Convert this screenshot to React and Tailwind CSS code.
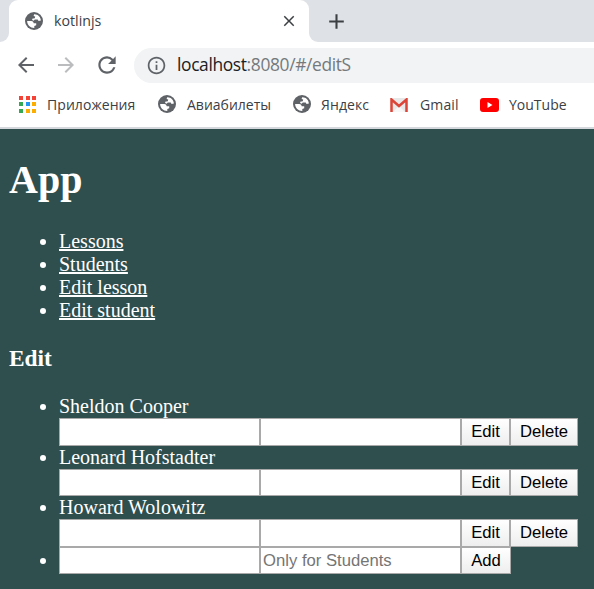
import React from "react";
import { MdArrowBack, MdArrowForward, MdRefresh, MdInfoOutline, MdClose, MdAdd } from "react-icons/md";

const links = ["Lessons", "Students", "Edit lesson", "Edit student"];
const students = ["Sheldon Cooper", "Leonard Hofstadter", "Howard Wolowitz"];
const appColors = [
  "bg-[#f44336]", "bg-[#f44336]", "bg-[#f44336]",
  "bg-[#34a853]", "bg-[#2196f3]", "bg-[#fbad00]",
  "bg-[#34a853]", "bg-[#fbad00]", "bg-[#fbad00]",
];

function Globe() {
  return (
    <svg className="size-[18px] shrink-0" viewBox="0 0 18 18">
      <circle cx="9" cy="9" r="9" fill="#5f6368" />
      <path
        d="M9.200 2.200C12.800 2 15.800 5 15.900 8.600L13.600 8.900 12.700 7.600H9.800L8.600 8.800 7.200 8V6.700L9.800 6.300 10.200 4.600 8.600 3.900Z"
        fill="#fff"
      />
      <path
        d="M2.100 9H6.200C8 9 8.500 10.200 8.700 11.200H11.200V13.300L9.300 14V15.900C5.500 16 2.200 13 2.100 9Z"
        fill="#fff"
      />
    </svg>
  );
}

function TabStrip() {
  return (
    <div className="flex h-[42px] bg-[#dee1e6]">
      <div className="flex w-[9px] shrink-0 bg-white">
        <div className="w-full rounded-br-[9px] bg-[#dee1e6]" />
      </div>
      <div className="flex shrink-0 bg-[#dee1e6]">
        <div className="flex w-[300px] items-center rounded-t-[9px] bg-white pr-[11px] pl-[16px]">
          <Globe />
          <span className="ml-[11px] flex-1 pb-px text-[14.2px] text-[#3c4043]">kotlinjs</span>
          <MdClose className="size-[18px] text-[#3c4043]" />
        </div>
      </div>
      <div className="flex flex-1 bg-white">
        <div className="flex flex-1 items-center rounded-bl-[9px] bg-[#dee1e6] pl-[15px]">
          <MdAdd className="size-[25px] text-[#3c4043]" />
        </div>
      </div>
    </div>
  );
}

function Toolbar() {
  return (
    <div className="flex h-[46px] items-center bg-white pl-[14px]">
      <MdArrowBack className="mb-[1px] size-[24px] shrink-0 text-[#5f6368]" />
      <MdArrowForward className="mb-[1px] ml-[16px] size-[24px] shrink-0 text-[#babcbe]" />
      <MdRefresh className="mb-[1px] ml-[16px] size-[26px] shrink-0 text-[#5f6368]" />
      <div className="ml-[14px] flex h-[35px] flex-1 items-center rounded-l-full bg-[#f1f3f4] pl-[12px]">
        <MdInfoOutline className="size-[21px] shrink-0 text-[#5f6368]" />
        <span className="ml-[10px] pb-[1px] text-[17.4px] tracking-[-0.36px] whitespace-nowrap text-[#75797d]">
          <span className="text-[#202124]">localhost</span>:8080/#/editS
        </span>
      </div>
    </div>
  );
}

function Bookmarks() {
  return (
    <div className="flex h-[41px] items-center border-b-2 border-[#d5d9dd] bg-white pb-[7px] pl-[19px] text-[14px] whitespace-nowrap text-[#3c4043]">
      <div className="grid shrink-0 grid-cols-3 gap-[2.5px]">
        {appColors.map((c, i) => (
          <div key={i} className={`size-[4px] ${c}`} />
        ))}
      </div>
      <div className="ml-[11px] w-[111px] shrink-0 tracking-[0.06px]">Приложения</div>
      <Globe />
      <div className="ml-[11px] w-[106px] shrink-0">Авиабилеты</div>
      <Globe />
      <div className="ml-[10px] w-[69px] shrink-0 tracking-[0.1px]">Яндекс</div>
      <svg className="mt-[2px] h-[14px] w-[18px] shrink-0" viewBox="0 0 18 14">
        <path d="M1 0h16v14H1z" fill="#e8e8e8" />
        <path d="M3 14l6-6 6 6z" fill="#f7f7f7" />
        <path d="M1.500 14V1.500L9 8l7.500-6.500V14" fill="none" stroke="#dc4437" strokeWidth="2.500" />
      </svg>
      <div className="ml-[12px] w-[60px] shrink-0 tracking-[0.15px]">Gmail</div>
      <svg className="mt-[1px] h-[14px] w-[19px] shrink-0" viewBox="0 0 19 14">
        <rect width="19" height="14" rx="3" fill="#f00" />
        <path d="M7.500 4v6l5-3z" fill="#fff" />
      </svg>
      <div className="ml-[10px]">YouTube</div>
    </div>
  );
}

function Field({ placeholder }) {
  return (
    <input
      placeholder={placeholder}
      className="h-full w-[201px] border border-[#a9a9a9] bg-white px-[2px] pt-[1px] text-[16.67px] text-black outline-none placeholder:text-[#757575]"
    />
  );
}

function Button({ width, children }) {
  return (
    <button className={`${width} h-full border border-[#a9a9a9] bg-linear-to-b from-white to-[#eeeeee] text-[16.67px] leading-[19px] text-black`}>
      {children}
    </button>
  );
}

export default function App() {
  return (
    <div className="h-[589px] w-full overflow-hidden bg-[#2f4f4f]">
      <header className="font-['Open_Sans','Noto_Sans',sans-serif]">
        <TabStrip />
        <Toolbar />
        <Bookmarks />
      </header>
      <main className="pl-[9px] font-['Liberation_Serif',serif] text-[20px] leading-[23px] text-white">
        <h1 className="pt-[28px] text-[40px] leading-[46px] font-bold">App</h1>
        <ul className="mt-[27px] list-disc pl-[50px]">
          {links.map((label) => (
            <li key={label}>
              <a className="underline">{label}</a>
            </li>
          ))}
        </ul>
        <h3 className="mt-[23px] text-[23.4px] leading-[27px] font-bold">Edit</h3>
        <ul className="mt-[23px] list-disc pl-[50px]">
          {students.map((name) => (
            <li key={name}>
              {name}
              <div className="flex h-[27.5px] font-['Liberation_Sans',sans-serif]">
                <Field />
                <Field />
                <Button width="w-[49px]">Edit</Button>
                <Button width="w-[68px]">Delete</Button>
              </div>
            </li>
          ))}
          <li className="leading-[27px]">
            <div className="inline-flex h-[27.5px] align-top font-['Liberation_Sans',sans-serif]">
              <Field />
              <Field placeholder="Only for Students" />
              <Button width="w-[50px]">Add</Button>
            </div>
          </li>
        </ul>
      </main>
    </div>
  );
}
